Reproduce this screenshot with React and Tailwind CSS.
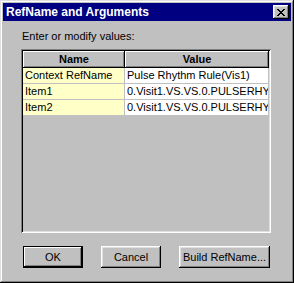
export default function App() {
  const font = { fontFamily: '"Liberation Sans", Arial, sans-serif' };
  const rows = [
    ["Context RefName", "Pulse Rhythm Rule(Vis1)"],
    ["Item1", "0.Visit1.VS.VS.0.PULSERHYTHM"],
    ["Item2", "0.Visit1.VS.VS.0.PULSERHY"],
  ];
  const raised =
    "shadow-[inset_-1px_-1px_#000,inset_1px_1px_#fff,inset_-2px_-2px_#808080,inset_2px_2px_#dfdfdf]";
  return (
    <div
      style={font}
      className="w-[294px] h-[283px] bg-[#c0c0c0] p-[3px] flex flex-col shadow-[inset_-1px_-1px_#000,inset_1px_1px_#dfdfdf,inset_-2px_-2px_#808080,inset_2px_2px_#fff] text-black"
    >
      <div className="h-[18px] bg-[#000080] flex items-center justify-between pl-[3px] pr-[2px]">
        <span className="text-white font-bold text-[12px] leading-none">RefName and Arguments</span>
        <div className={`w-[16px] h-[14px] bg-[#c0c0c0] ${raised} flex items-center justify-center`}>
          <svg width="8" height="7" viewBox="0 0 8 7" shapeRendering="crispEdges">
            <path
              d="M0 0h2v1h-2zM6 0h2v1h-2zM1 1h2v1h-2zM5 1h2v1h-2zM2 2h4v1h-4zM3 3h2v1h-2zM2 4h4v1h-4zM1 5h2v1h-2zM5 5h2v1h-2zM0 6h2v1h-2zM6 6h2v1h-2z"
              fill="#000"
            />
          </svg>
        </div>
      </div>

      <div className="pl-[19px] mt-[9px] text-[11px] leading-[13px]">Enter or modify values:</div>

      <div className="ml-[18px] mt-[6px] w-[250px] h-[184px] p-[2px] shadow-[inset_1px_1px_#808080,inset_-1px_-1px_#fff,inset_2px_2px_#000,inset_-2px_-2px_#dfdfdf]">
        <div className="grid grid-cols-[102px_144px] text-[11px]">
          <div className="h-[17px] flex items-center justify-center font-bold bg-[#c0c0c0] shadow-[inset_-1px_-1px_#000,inset_1px_1px_#fff,inset_-2px_-2px_#808080]">
            Name
          </div>
          <div className="h-[17px] flex items-center justify-center font-bold bg-[#c0c0c0] shadow-[inset_-1px_-1px_#000,inset_1px_1px_#fff,inset_-2px_-2px_#808080]">
            Value
          </div>
          {rows.map(([n, v]) => (
            <>
              <div
                key={n + "n"}
                className="h-[16px] bg-[#ffffc8] border-r border-b border-[#c0c0c0] pl-[2px] flex items-center whitespace-nowrap overflow-hidden"
              >
                {n}
              </div>
              <div
                key={n + "v"}
                className="h-[16px] bg-white border-r border-b border-[#c0c0c0] pl-[2px] flex items-center whitespace-nowrap overflow-hidden"
              >
                {v}
              </div>
            </>
          ))}
        </div>
      </div>

      <div className="flex pl-[20px] mt-[13px] gap-[18px] text-[11px]">
        <button className="w-[60px] h-[22px] bg-[#c0c0c0] border border-black shadow-[inset_-1px_-1px_#000,inset_1px_1px_#fff,inset_-2px_-2px_#808080] flex items-center justify-center">
          OK
        </button>
        <button className={`w-[60px] h-[22px] bg-[#c0c0c0] ${raised} flex items-center justify-center`}>
          Cancel
        </button>
        <button className={`w-[91px] h-[22px] bg-[#c0c0c0] ${raised} flex items-center justify-center`}>
          Build RefName...
        </button>
      </div>
    </div>
  );
}
